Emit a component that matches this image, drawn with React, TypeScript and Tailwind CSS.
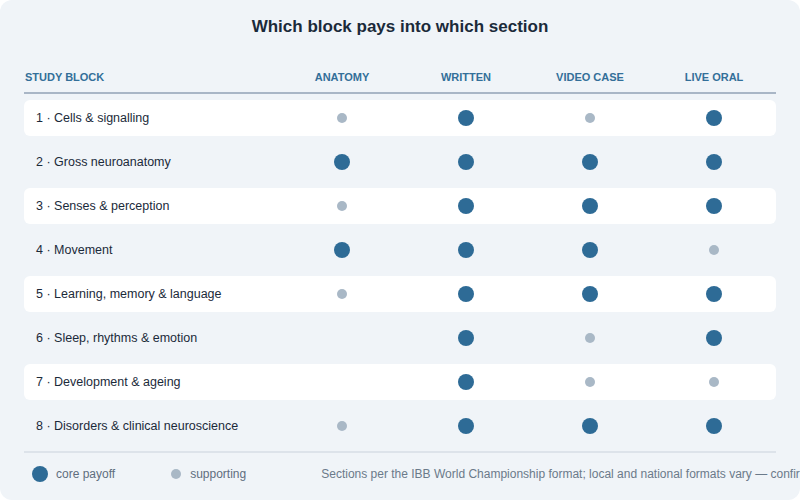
import React from "react";

type Mark = "core" | "sup" | null;

const rows: { label: string; marks: Mark[] }[] = [
  { label: "1 · Cells & signalling", marks: ["sup", "core", "sup", "core"] },
  { label: "2 · Gross neuroanatomy", marks: ["core", "core", "core", "core"] },
  { label: "3 · Senses & perception", marks: ["sup", "core", "core", "core"] },
  { label: "4 · Movement", marks: ["core", "core", "core", "sup"] },
  { label: "5 · Learning, memory & language", marks: ["sup", "core", "core", "core"] },
  { label: "6 · Sleep, rhythms & emotion", marks: [null, "core", "sup", "core"] },
  { label: "7 · Development & ageing", marks: [null, "core", "sup", "sup"] },
  { label: "8 · Disorders & clinical neuroscience", marks: ["sup", "core", "core", "core"] },
];

const cols = ["Anatomy", "Written", "Video case", "Live oral"];

const Dot = ({ mark }: { mark: Mark }) => {
  if (mark === "core") return <span className="block h-4 w-4 shrink-0 rounded-full bg-[#2e6b96]" />;
  if (mark === "sup") return <span className="block h-[10px] w-[10px] shrink-0 rounded-full bg-[#a9b8c6]" />;
  return null;
};

const App = () => {
  return (
    <div className="h-[500px] w-[800px] bg-white font-['Liberation_Sans',Arial,sans-serif]">
      <div className="h-full w-full overflow-hidden rounded-xl bg-[#f0f4f8] px-6">
        <h1 className="pt-[16px] text-center text-[17px] font-bold leading-[22px] text-[#1b2a3a]">
          Which block pays into which section
        </h1>

        <div className="mt-[31px] flex h-[16px] items-center text-[11px] font-bold uppercase text-[#336f99]">
          <div className="w-[256px] pl-px">Study block</div>
          {cols.map((c) => (
            <div key={c} className="w-[124px] text-center">
              {c}
            </div>
          ))}
        </div>
        <div className="mt-[7px] h-[2px] bg-[#a9b6c6]" />

        <div className="mt-[6px] flex flex-col gap-2">
          {rows.map((r, i) => (
            <div
              key={r.label}
              className={`flex h-9 items-center rounded-md ${i % 2 === 0 ? "bg-white" : ""}`}
            >
              <div className="w-[256px] pl-3 text-[12.5px] text-[#1b2a3a]">{r.label}</div>
              {r.marks.map((m, j) => (
                <div key={j} className="flex w-[124px] justify-center">
                  <Dot mark={m} />
                </div>
              ))}
            </div>
          ))}
        </div>

        <div className="mt-[7px] h-[2px] bg-[#dde3ea]" />

        <div className="mt-[12px] flex items-center whitespace-nowrap text-[12px] text-[#5f6e7e]">
          <span className="ml-2 block h-4 w-4 shrink-0 rounded-full bg-[#2e6b96]" />
          <span className="ml-2">core payoff</span>
          <span className="ml-[56px] block h-[10px] w-[10px] shrink-0 rounded-full bg-[#a9b8c6]" />
          <span className="ml-[9px]">supporting</span>
          <span className="ml-[75px] text-[#6b7a8a]">
            Sections per the IBB World Championship format; local and national formats vary — confirm with your organiser.
          </span>
        </div>
      </div>
    </div>
  );
};

export default App;
